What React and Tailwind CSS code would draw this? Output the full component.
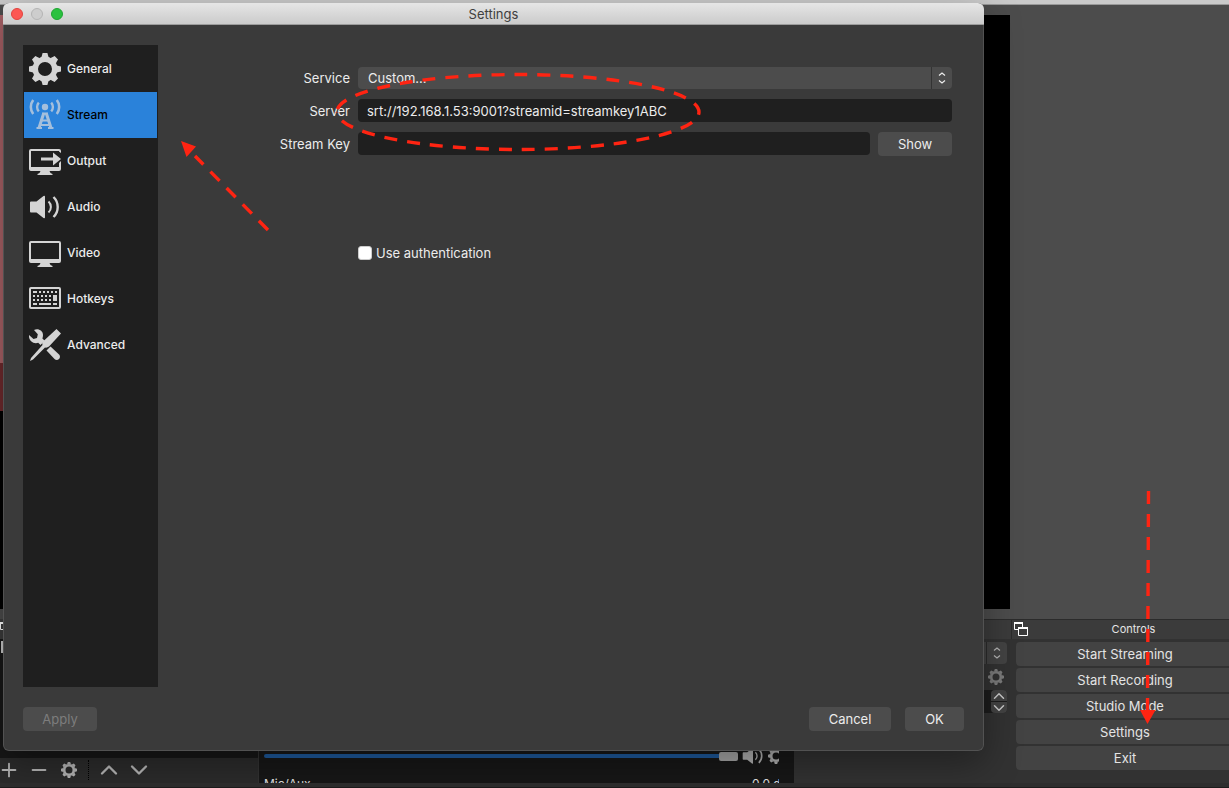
import { useState } from 'react';
import { FiPlus, FiMinus, FiChevronUp, FiChevronDown } from 'react-icons/fi';

const teeth = [0, 45, 90, 135, 180, 225, 270, 315];

function GearIcon({ className }) {
  return (
    <svg viewBox="0 0 32 32" className={className} fill="currentColor">
      <circle cx="16" cy="16" r="9.6" fill="none" stroke="currentColor" strokeWidth="5.2" />
      {teeth.map((angle) => (
        <path key={angle} d="M13.6 0h4.8l.9 3.2c.4 1 1 1.4 1.800 1.800h-10.200c.8-.4 1.400-.8 1.800-1.800z" transform={`rotate(${angle} 16 16)`} />
      ))}
    </svg>
  );
}

function StreamIcon({ className }) {
  return (
    <svg viewBox="0 0 32 32" className={className} fill="none" stroke="currentColor">
      <circle cx="16" cy="8" r="3.2" fill="currentColor" stroke="none" />
      <path strokeWidth="2.4" d="M9.800 3.600a6.500 6.500 0 0 0 0 8.800M22.200 3.600a6.500 6.500 0 0 1 0 8.800" />
      <path strokeWidth="2.600" d="M4.200 1a11.500 11.500 0 0 0 0 14M27.800 1a11.500 11.500 0 0 1 0 14" />
      <path strokeWidth="3" d="M14.800 14 9.800 29.500M17.200 14 22.200 29.500" />
      <path strokeWidth="2.200" d="M13.300 14.600h5.400M12.500 21.500h7M11 26h10M7.500 29h5.500M19 29h5.500" />
    </svg>
  );
}

function OutputIcon({ className }) {
  return (
    <svg viewBox="0 0 32 32" className={className} fill="currentColor">
      <path d="M2 4h28q2 0 2 2v2l-2-1.500V6H2v16h28v-4l2-2v8q0 2-2 2H20.500q.5 2.500 3 3v1h-15v-1q2.500-.5 3-3H2q-2 0-2-2V6q0-2 2-2z" />
      <path d="M12 12.500h12V7.500l8 6.500-8 6.500v-5H12z" />
    </svg>
  );
}

function AudioIcon({ className }) {
  return (
    <svg viewBox="0 0 32 32" className={className} fill="none" stroke="currentColor">
      <path fill="currentColor" stroke="none" d="M2 10.500h5.500L14.500 5q1.500-.8 1.500.8v20.400q0 1.600-1.500.8L7.500 21.500H2q-1 0-1-1v-9q0-1 1-1z" />
      <path strokeWidth="2" d="M19.500 10.500a7.500 7.500 0 0 1 0 11" />
      <path strokeWidth="2.400" d="M24.500 6a14 14 0 0 1 0 20" />
    </svg>
  );
}

function VideoIcon({ className }) {
  return (
    <svg viewBox="0 0 32 32" className={className} fill="currentColor">
      <path fillRule="evenodd" d="M2 4h28q2 0 2 2v18q0 2-2 2H20.500q.5 2.500 3 3v1h-15v-1q2.500-.5 3-3H2q-2 0-2-2V6q0-2 2-2zM2 6v16h28V6z" />
    </svg>
  );
}

function HotkeysIcon({ className }) {
  return (
    <svg viewBox="0 0 32 32" className={className} fill="none" stroke="currentColor" strokeWidth="2">
      <rect x="1" y="5" width="30" height="20" rx="1" />
      <path d="M4 9h4M10 9h2M14 9h2M18 9h2M22 9h2M26 9h2M4 13h2M8 13h2M12 13h2M16 13h2M20 13h2M4 17h2M8 17h2M12 17h2M16 17h2M20 17h2M4 21h4M10 21h12M24 21h4" />
      <path fill="currentColor" stroke="none" d="M24 12h4v6h-4z" />
    </svg>
  );
}

function AdvancedIcon({ className }) {
  return (
    <svg viewBox="0 0 32 32" className={className} fill="currentColor">
      <path d="M5 1c4-2 9 .5 9 5q0 2-.6 3.400l2.400 2.400-4.300 4.200-2.300-2.200C5 15.500 0 12 0 7.500V6l4.500 4 3.500-1 .8-3.800z" />
      <path d="M17.500 21.500 21.500 17.500 30 25.500c3 3-1.500 7.500-4.500 4.500z" />
      <path d="M27.500 0 32 4.500 20 17.500q-2 1.500-4 1L4 30.500 1 32l1-3L13.500 16q-1-2 .8-3.800z" />
    </svg>
  );
}

function DetachIcon({ className }) {
  return (
    <svg viewBox="0 0 14 14" className={className} fill="none" stroke="currentColor">
      <path d="M.5.5h8v7h-8z" />
      <path strokeWidth="2" d="M0 1h9" />
      <path fill="#3b3b3b" d="M4.500 5.500h9v8h-9z" />
      <path strokeWidth="2" d="M4 6h10" />
    </svg>
  );
}

function UpDownIcon({ className }) {
  return (
    <svg viewBox="0 0 8 12" className={className} fill="none" stroke="currentColor" strokeWidth="1.200">
      <path d="M1 3.500 4 1l3 2.500M1 8.500 4 11l3-2.500" />
    </svg>
  );
}

const navItems = [
  { label: 'General', icon: GearIcon },
  { label: 'Stream', icon: StreamIcon },
  { label: 'Output', icon: OutputIcon },
  { label: 'Audio', icon: AudioIcon },
  { label: 'Video', icon: VideoIcon },
  { label: 'Hotkeys', icon: HotkeysIcon },
  { label: 'Advanced', icon: AdvancedIcon },
];

const controls = ['Start Streaming', 'Start Recording', 'Studio Mode', 'Settings', 'Exit'];

function SourcesDock() {
  return (
    <section className="flex w-[258px] shrink-0 flex-col bg-[#171717] text-[#b4b4b4]">
      <div className="flex h-5 items-center bg-[#3b3b3b]">
        <DetachIcon className="size-[14px] text-white" />
      </div>
      <div className="mt-[2px] ml-px h-3 w-[2px] bg-[#c8c8c8]" />
      <div className="mt-auto flex h-[25px] items-center bg-[#2b2b2b] pb-[2px]">
        <button aria-label="Add" className="flex w-[18px] justify-center"><FiPlus size={22} className="shrink-0" /></button>
        <button aria-label="Remove" className="ml-3 flex w-[18px] justify-center"><FiMinus size={22} className="shrink-0" /></button>
        <button aria-label="Properties" className="ml-3 flex w-[18px] justify-center"><GearIcon className="size-4" /></button>
        <div className="ml-[10px] h-5 border-l border-dotted border-black" />
        <button aria-label="Move up" className="ml-[11px] flex w-[18px] justify-center"><FiChevronUp size={28} className="shrink-0" /></button>
        <button aria-label="Move down" className="ml-3 flex w-[18px] justify-center"><FiChevronDown size={28} className="shrink-0" /></button>
      </div>
    </section>
  );
}

function MixerDock() {
  return (
    <section className="ml-px flex min-w-0 flex-1 flex-col justify-end bg-[#171717] pr-[15px] pl-[5px]">
      <div className="flex h-5 items-center overflow-hidden text-[#b0b0b0]">
        <input
          type="range"
          aria-label="Volume"
          defaultValue="100"
          className="h-1 min-w-0 flex-1 appearance-none rounded-full bg-[#1e5a9c] [&::-webkit-slider-thumb]:h-[9px] [&::-webkit-slider-thumb]:w-[19px] [&::-webkit-slider-thumb]:appearance-none [&::-webkit-slider-thumb]:rounded-xs [&::-webkit-slider-thumb]:bg-[#a5a5a5]"
        />
        <AudioIcon className="ml-1 size-[22px] shrink-0" />
        <div className="ml-1 w-[11px] overflow-hidden">
          <GearIcon className="size-4" />
        </div>
      </div>
      <div className="mt-[10px] flex h-[7px] justify-between overflow-hidden text-xs text-[#e0e0e0]">
        <span>Mic/Aux</span>
        <span className="w-[27px] overflow-hidden whitespace-nowrap">0.0 dB</span>
      </div>
    </section>
  );
}

function TransitionsDock() {
  return (
    <section className="flex w-[217px] shrink-0 flex-col">
      <div className="h-5 border-t border-[#2b2b2b] bg-[#3b3b3b]" />
      <div className="mt-[3px] mr-1 flex flex-col items-end">
        <button aria-label="Transition" className="flex h-[22px] w-full justify-end rounded-sm bg-[#434343]">
          <span className="flex h-full w-[21px] items-center justify-center border-l border-[#2b2b2b]">
            <UpDownIcon className="h-3 w-2 text-[#b5b5b5]" />
          </span>
        </button>
        <button aria-label="Transition properties" className="mt-[5px] mr-[3px] text-[#7c7c7c]">
          <GearIcon className="size-4" />
        </button>
        <div className="mt-[5px] flex w-full justify-end rounded-sm bg-[#1c1c1c] text-[#c8c8c8]">
          <div className="flex w-4 flex-col gap-px">
            <button aria-label="Increase" className="flex h-[11px] items-center justify-center overflow-hidden rounded-t-sm bg-[#434343]"><FiChevronUp size={18} className="shrink-0" /></button>
            <button aria-label="Decrease" className="flex h-[11px] items-center justify-center overflow-hidden rounded-b-sm bg-[#434343]"><FiChevronDown size={18} className="shrink-0" /></button>
          </div>
        </div>
      </div>
    </section>
  );
}

function ControlsDock() {
  return (
    <section className="flex w-[218px] shrink-0 flex-col overflow-hidden text-[#e4e4e4]">
      <div className="flex h-5 items-center border-t border-l border-[#2b2b2b] bg-[#3b3b3b] pb-[2px] pl-[2px]">
        <DetachIcon className="size-[14px] text-white" />
        <h2 className="flex-1 pl-[10px] text-center text-[11px]">Controls</h2>
      </div>
      <div className="mt-[3px] -mr-[5px] ml-[5px] flex flex-col gap-[2px]">
        {controls.map((label) => (
          <button key={label} className="h-6 rounded-sm bg-[#434343]">{label}</button>
        ))}
      </div>
    </section>
  );
}

function MainWindow() {
  return (
    <div className="flex min-h-screen flex-col bg-[#323232]">
      <div className="h-[5px] border-b border-[#999] bg-[#cacaca]" />
      <div className="flex flex-1 bg-[#4c4c4c] py-[10px]">
        <div className="flex flex-1 bg-black">
          <div className="h-2/3 w-[3px] bg-linear-to-b from-[#a86166] from-88% to-[#6e2a2d] to-88%" />
        </div>
        <div className="w-[219px]" />
      </div>
      <div className="flex h-[164px]">
        <SourcesDock />
        <MixerDock />
        <TransitionsDock />
        <ControlsDock />
      </div>
      <div className="h-[5px] border-b border-[#1c1c1c] bg-[#2e2e2e]" />
    </div>
  );
}

function StreamForm() {
  const [server, setServer] = useState('srt://192.168.1.53:9001?streamid=streamkey1ABC');
  return (
    <form className="grid flex-1 grid-cols-[192px_1fr] content-start items-center gap-x-2 gap-y-[10px] pt-[22px] pr-3">
      <label htmlFor="service" className="text-right">Service</label>
      <div className="relative h-[22px]">
        <select id="service" className="block h-full w-full appearance-none rounded-sm bg-[#4c4c4c] px-[10px] outline-none">
          <option>Custom...</option>
        </select>
        <span className="pointer-events-none absolute inset-y-0 right-0 flex w-[21px] items-center justify-center border-l border-[#333]">
          <UpDownIcon className="h-3 w-2" />
        </span>
      </div>
      <label htmlFor="server" className="text-right">Server</label>
      <input
        id="server"
        type="text"
        value={server}
        onChange={(e) => setServer(e.target.value)}
        className="h-[23px] w-full rounded-sm bg-[#1f1f1f] px-[9px] outline-none"
      />
      <label htmlFor="key" className="text-right">Stream Key</label>
      <div className="flex items-start gap-2">
        <input id="key" type="password" className="h-[23px] min-w-0 flex-1 rounded-sm bg-[#1f1f1f] px-[9px] outline-none" />
        <button type="button" className="h-6 w-[74px] rounded-sm bg-[#4c4c4c]">Show</button>
      </div>
      <label className="col-start-2 mt-[79px] flex items-center gap-1">
        <input type="checkbox" className="size-[14px] appearance-none rounded-[3px] border border-[#ccc] bg-white" />
        Use authentication
      </label>
    </form>
  );
}

function SettingsDialog() {
  const [active, setActive] = useState('Stream');
  return (
    <div role="dialog" aria-label="Settings" className="absolute top-[3px] right-[245px] bottom-[37px] left-[3px] flex flex-col overflow-hidden rounded-md bg-[#3a3a3a] text-[#ececec] shadow-[0_12px_36px_rgba(0,0,0,0.35)]">
      <header className="flex h-[22px] shrink-0 items-center border-b border-[#9c9c9c] bg-linear-to-b from-[#e6e6e6] to-[#cbcbcb] px-2">
        <div className="flex w-[52px] gap-2">
          <button aria-label="Close" className="size-3 rounded-full border border-[#e0443e] bg-[#fc5753]" />
          <button aria-label="Minimize" className="size-3 rounded-full border border-[#b4b4b4] bg-[#cdcdcd]" />
          <button aria-label="Zoom" className="size-3 rounded-full border border-[#1fa532] bg-[#2ac13f]" />
        </div>
        <h1 className="flex-1 pr-[52px] text-center text-[#404040]">Settings</h1>
      </header>
      <div className="flex flex-1 flex-col gap-5 rounded-b-md border border-t-0 border-[#525252] px-[19px] pt-5 pb-[19px]">
        <div className="flex flex-1">
          <nav className="w-[135px] bg-[#1f1f1f] p-px text-xs font-medium">
            {navItems.map(({ label, icon: Icon }) => (
              <button
                key={label}
                onClick={() => setActive(label)}
                className={`flex h-[46px] w-full items-center gap-[6px] pl-[5px] text-left ${active === label ? 'bg-[#2a82da] text-black' : ''}`}
              >
                <Icon className={`size-8 ${active === label ? 'text-[#a4bfdc]' : 'text-[#d4d4d4]'}`} />
                {label}
              </button>
            ))}
          </nav>
          <StreamForm />
        </div>
        <footer className="flex gap-[14px]">
          <button disabled className="mr-auto h-6 w-[74px] rounded-sm bg-[#4c4c4c] text-[#7d7d7d]">Apply</button>
          <button className="h-6 w-[82px] rounded-sm bg-[#4c4c4c]">Cancel</button>
          <button className="h-6 w-[59px] rounded-sm bg-[#4c4c4c]">OK</button>
        </footer>
      </div>
    </div>
  );
}

// Red dashed callouts drawn over both windows
function Callouts() {
  return (
    <svg width="1229" height="788" className="pointer-events-none absolute top-0 left-0" fill="none" stroke="#ff2412" strokeWidth="3.400" strokeDasharray="13 10">
      <path d="M337 112A181 37.500 0 0 1 699 112A181 37.500 0 0 1 337 112" strokeDashoffset="-3" />
      <path d="M268 230 195 156" />
      <path d="M181 141 196 146.500 186.500 157z" fill="#ff2412" stroke="none" />
      <path d="M1148.500 491 1147.500 711" />
      <path d="M1140 710h15.500L1147.500 724z" fill="#ff2412" stroke="none" />
    </svg>
  );
}

export default function App() {
  return (
    <div className="relative min-h-screen overflow-hidden font-['Inter','Liberation_Sans',sans-serif] text-[13px] leading-4">
      <MainWindow />
      <SettingsDialog />
      <Callouts />
    </div>
  );
}
